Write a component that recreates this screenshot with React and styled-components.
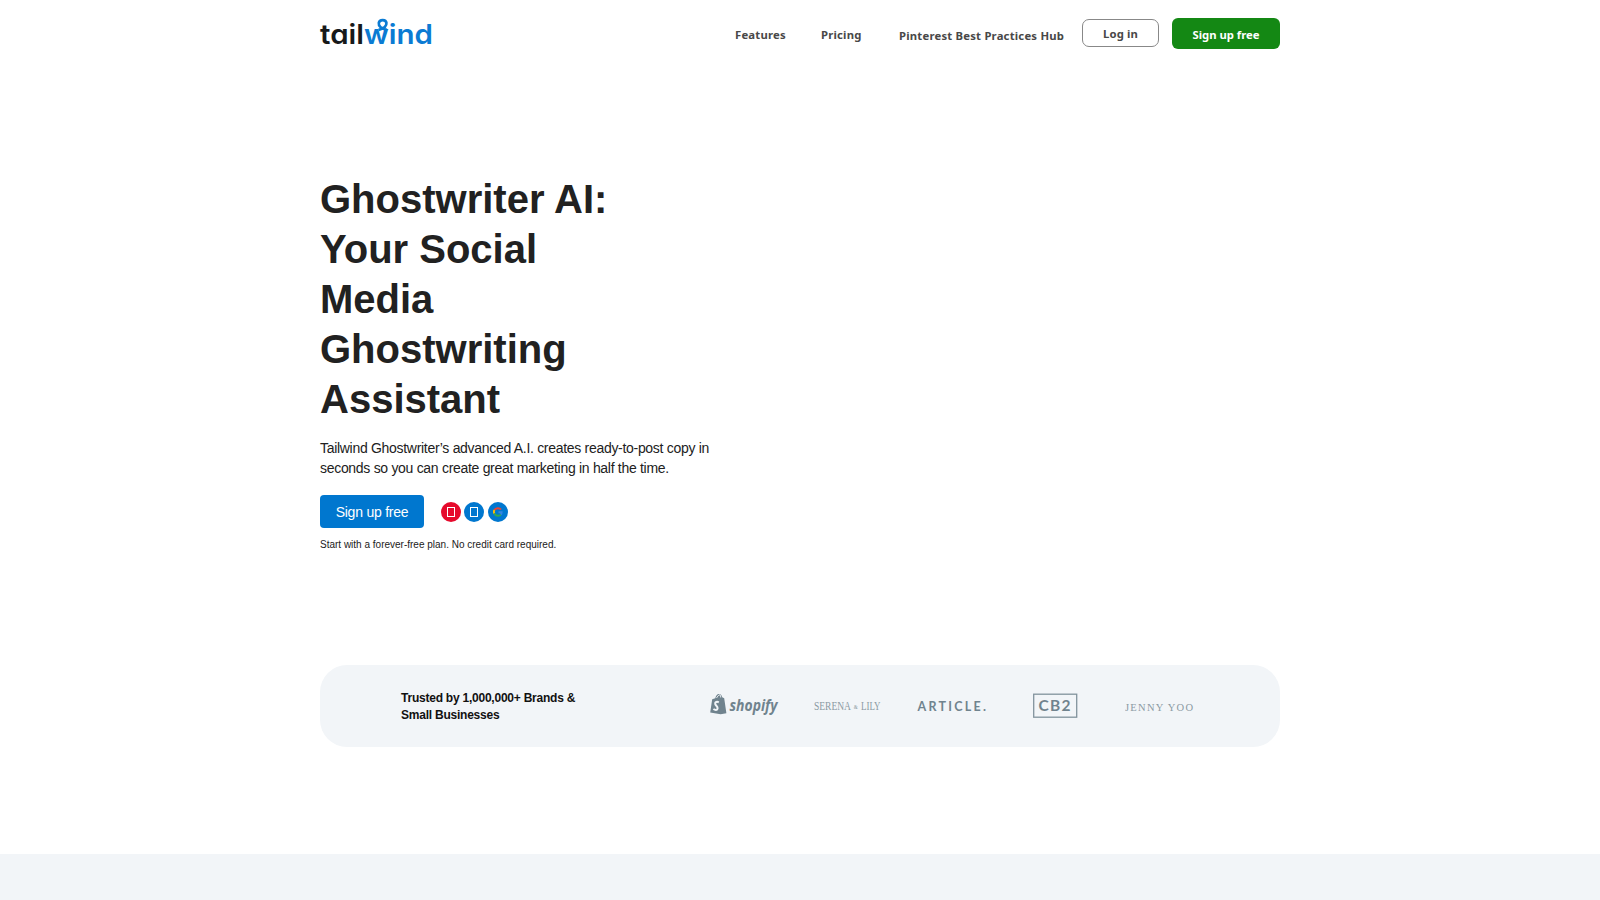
import React from "react";
import styled, { createGlobalStyle } from "styled-components";

const GlobalStyle = createGlobalStyle`
  * { box-sizing: border-box; }
  body {
    margin: 0;
    background: #fff;
    color: #212121;
    font-family: "Liberation Sans", Arial, sans-serif;
    overflow: hidden;
  }
`;

const Page = styled.div`
  display: flex;
  flex-direction: column;
  align-items: center;
  height: 900px;
  overflow: hidden;
`;

const Container = styled.div`
  width: 960px;
`;

const Header = styled.header`
  display: flex;
  align-items: flex-start;
  height: 174px;
  padding-top: 18px;
  font-family: "Noto Sans", "Open Sans", sans-serif;
  font-weight: 700;
  font-size: 11.3px;
`;

const Nav = styled.nav`
  display: flex;
  margin-left: auto;
  padding-top: 9px;
`;

const NavLink = styled.a`
  width: ${(p) => p.$width}px;
  padding-top: ${(p) => p.$drop || 0}px;
  line-height: 16px;
  letter-spacing: 0.21px;
  color: #484848;
  white-space: nowrap;
`;

const HeaderButton = styled.a`
  display: flex;
  align-items: center;
  justify-content: center;
  white-space: nowrap;
`;

const LoginButton = styled(HeaderButton)`
  width: 77px;
  height: 28px;
  margin: 1px 13px 0 0;
  border: 1px solid #888;
  border-radius: 7px;
  color: #484848;
  letter-spacing: 0.1px;
`;

const SignupButton = styled(HeaderButton)`
  width: 108px;
  height: 31px;
  border-radius: 6px;
  background: #148814;
  color: #fff;
  padding-top: 1px;
`;

const Hero = styled.section`
  height: 491px;
`;

const Title = styled.h1`
  width: 300px;
  margin: 0 0 14px;
  font-size: 40px;
  line-height: 50px;
  font-weight: 700;
  color: #212121;
`;

const Lead = styled.p`
  width: 400px;
  margin: 0 0 17px;
  font-size: 14px;
  line-height: 20px;
  letter-spacing: -0.3px;
`;

const Actions = styled.div`
  display: flex;
  align-items: center;
`;

const CtaButton = styled.a`
  display: flex;
  align-items: center;
  justify-content: center;
  width: 104px;
  height: 33px;
  margin-right: 17px;
  border-radius: 4px;
  background: #0077cf;
  color: #fff;
  font-size: 14px;
  letter-spacing: -0.23px;
`;

const Badges = styled.div`
  display: flex;
  gap: 3.3px;
`;

const Badge = styled.span`
  display: flex;
  align-items: center;
  justify-content: center;
  width: 20px;
  height: 20px;
  border-radius: 50%;
  background: ${(p) => p.$color};
`;

const Glyph = styled.span`
  width: 8px;
  height: 10px;
  border: 1px solid #fff;
`;

const Note = styled.p`
  margin: 10px 0 0;
  font-size: 10px;
  line-height: 14px;
`;

const Trust = styled.section`
  display: flex;
  align-items: center;
  height: 82px;
  padding-left: 81px;
  border-radius: 27px;
  background: #f2f5f8;
`;

const TrustText = styled.p`
  width: 307px;
  margin: 0;
  padding-top: 2px;
  font-size: 12px;
  line-height: 17.5px;
  font-weight: 700;
  letter-spacing: -0.23px;
  color: #111;
`;

const Brands = styled.div`
  display: flex;
`;

const Brand = styled.svg`
  display: block;
  flex: none;
`;

const Wordmark = styled.svg`
  display: block;
  flex: none;
  overflow: visible;
  font-family: Inter, sans-serif;
  font-size: 27.5px;
  font-weight: 600;
  font-feature-settings: "cv11" 1;
`;

const Band = styled.div`
  width: 100%;
  height: 46px;
  margin-top: auto;
  background: #f2f5f8;
`;

function Logo() {
  return (
    <Wordmark width="114" height="31" viewBox="0 0 114 31" role="img" aria-label="tailwind">
      <text x="0" y="25.8" fill="#17191a" textLength="44" lengthAdjust="spacingAndGlyphs">tail</text>
      <text x="44" y="25.8" fill="#0b7bd3" textLength="69" lengthAdjust="spacingAndGlyphs">wind</text>
      <path
        d="M67 11.800C61.500 11 58.300 8 58.800 5C59.500 1.200 65.800 1 66.400 4.800C66.800 8 63.500 10.500 58.500 12"
        fill="none"
        stroke="#0b7bd3"
        strokeWidth="2.7"
      />
    </Wordmark>
  );
}

function BrandLogos() {
  return (
    <Brands>
      <Brand width="105" height="30">
        <path
          d="M4.200 8.200L7.200 7.300C7.800 4.400 9.800 2.300 11.700 3.100C13.100 3.300 14 5.400 14.200 6.300L16.200 7.300L18.400 22.200L12.600 23.300L2.200 21.500Z"
          fill="#70838e"
        />
        <path d="M8.500 7Q10 4 12 3.700Q12.800 4.600 12.700 6.500" fill="none" stroke="#f2f5f8" strokeWidth="0.900" />
        <path
          d="M10.800 11.300C9 10.300 6.900 11 7.200 12.800C7.500 14.700 9.800 15 9.600 17.400C9.400 19.400 7 19.200 5.400 18"
          fill="none"
          stroke="#f2f5f8"
          strokeWidth="2"
        />
        <text x="21.500" y="20" fill="#70838e" fontFamily="Open Sans" fontStyle="italic" fontWeight="700" fontSize="15.500" textLength="48" lengthAdjust="spacingAndGlyphs">shopify</text>
      </Brand>
      <Brand width="104" height="30" fill="#8b9aa3" fontFamily="Liberation Serif">
        <text x="1" y="18.500" fontSize="11.500" textLength="37" lengthAdjust="spacingAndGlyphs">SERENA</text>
        <text x="40.800" y="17.500" fontSize="6" textLength="4" lengthAdjust="spacingAndGlyphs">&amp;</text>
        <text x="48" y="18.500" fontSize="11.500" textLength="19.500" lengthAdjust="spacingAndGlyphs">LILY</text>
      </Brand>
      <Brand width="116" height="30" fill="#70838e">
        <text x="0.500" y="19.500" fontFamily="Lato" fontWeight="700" fontSize="12.500" textLength="68.500" lengthAdjust="spacing">ARTICLE.</text>
      </Brand>
      <Brand width="92" height="30" fill="#70838e">
        <rect x="0.700" y="3.200" width="43" height="23" fill="none" stroke="#82939d" strokeWidth="1.300" />
        <text x="5.500" y="20.200" fontFamily="Lato" fontWeight="700" fontSize="15.500" textLength="32" lengthAdjust="spacing">CB2</text>
      </Brand>
      <Brand width="72" height="30" fill="#8b9aa3">
        <text x="0" y="19.500" fontFamily="Liberation Serif" fontSize="10.500" textLength="68" lengthAdjust="spacing">JENNY YOO</text>
      </Brand>
    </Brands>
  );
}

export default function App() {
  return (
    <Page>
      <GlobalStyle />
      <Container>
        <Header>
          <Logo />
          <Nav>
            <NavLink $width={86}>Features</NavLink>
            <NavLink $width={78}>Pricing</NavLink>
            <NavLink $width={183} $drop={1}>Pinterest Best Practices Hub</NavLink>
          </Nav>
          <LoginButton>Log in</LoginButton>
          <SignupButton>Sign up free</SignupButton>
        </Header>
        <Hero>
          <Title>Ghostwriter AI: Your Social Media Ghostwriting Assistant</Title>
          <Lead>Tailwind Ghostwriter’s advanced A.I. creates ready-to-post copy in seconds so you can create great marketing in half the time.</Lead>
          <Actions>
            <CtaButton>Sign up free</CtaButton>
            <Badges>
              <Badge $color="#e60a2c"><Glyph /></Badge>
              <Badge $color="#0077cf"><Glyph /></Badge>
              <Badge $color="#0077cf">
                <svg width="10" height="10" viewBox="0 0 10 10" fill="none" strokeWidth="2">
                  <path d="M1.300 3C2.800 0.600 6.500 0.600 8 2.500" stroke="#ea4335" />
                  <path d="M1.300 3Q0.500 5 1.300 6.500" stroke="#fbbc05" />
                  <path d="M1.300 6.500C2.800 9.300 6.500 9.300 7.800 7.500" stroke="#34a853" />
                  <path d="M5.500 5.200H8.600Q8.600 6.700 7.800 7.500" stroke="#3486e0" />
                </svg>
              </Badge>
            </Badges>
          </Actions>
          <Note>Start with a forever-free plan. No credit card required.</Note>
        </Hero>
        <Trust>
          <TrustText>Trusted by 1,000,000+ Brands &amp;<br />Small Businesses</TrustText>
          <BrandLogos />
        </Trust>
      </Container>
      <Band />
    </Page>
  );
}
